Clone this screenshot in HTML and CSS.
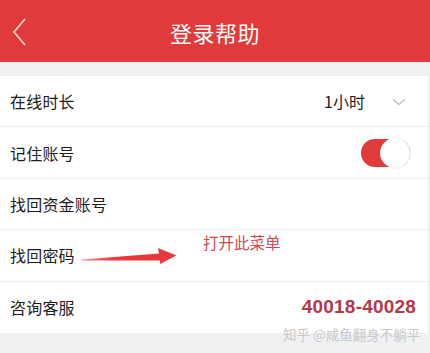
FILE: index.html
```html
<!DOCTYPE html>
<html lang="zh">
<head>
<meta charset="utf-8">
<link rel="stylesheet" href="styles.css">
</head>
<body>
<div class="page">
  <header class="topbar">
    <span class="back">
      <svg width="16" height="30" viewBox="0 0 16 30"><polyline points="13,2 2,15 13,28" fill="none" stroke="#f8dada" stroke-width="1.6"/></svg>
    </span>
    <h1 class="title">登录帮助</h1>
    <span class="spacer"></span>
  </header>
  <div class="gap"></div>
  <ul class="list">
    <li class="row">
      <span class="label">在线时长</span>
      <span class="value">
        <span class="duration">1小时</span>
        <svg class="caret" width="14" height="8" viewBox="0 0 14 8"><polyline points="1,1.5 7,6.5 13,1.5" fill="none" stroke="#bdbdbd" stroke-width="1.3"/></svg>
      </span>
    </li>
    <li class="row">
      <span class="label">记住账号</span>
      <span class="toggle"><span class="knob"></span></span>
    </li>
    <li class="row">
      <span class="label">找回资金账号</span>
    </li>
    <li class="row">
      <span class="label">找回密码</span>
    </li>
    <li class="row">
      <span class="label">咨询客服</span>
      <span class="phone">40018-40028</span>
    </li>
  </ul>
  <div class="bottom"></div>
  <svg class="arrow" width="430" height="353" viewBox="0 0 430 353">
    <defs>
      <linearGradient id="ag" x1="0" x2="1" y1="0" y2="0">
        <stop offset="0" stop-color="#f08a8a"/>
        <stop offset="0.35" stop-color="#e5393b"/>
        <stop offset="1" stop-color="#e63a3c"/>
      </linearGradient>
    </defs>
    <polygon points="82,259.5 159,253.5 158,248 176.5,255.5 160,264 160,260.5 82,260.5" fill="url(#ag)"/>
  </svg>
  <span class="note">打开此菜单</span>
  <span class="watermark">知乎 @咸鱼翻身不躺平</span>
</div>
</body>
</html>
```

FILE: styles.css
```css
* { box-sizing: border-box; }
html, body { margin: 0; padding: 0; }
body {
  background: #f0f1f3;
  font-family: "Noto Sans CJK SC", "Noto Sans", sans-serif;
  color: #1c1c1c;
}
.page {
  position: relative;
  width: 430px;
  height: 353px;
  overflow: hidden;
  background: #f0f1f3;
}
.topbar {
  height: 62px;
  background: #e03b3a;
  display: grid;
  grid-template-columns: 1fr auto 1fr;
  align-items: center;
}
.back {
  display: flex;
  align-items: center;
  padding-left: 12px;
  padding-top: 1px;
}
.back svg { display: block; }
.title {
  margin: 0;
  font-size: 22px;
  font-weight: 400;
  color: #fff;
  letter-spacing: 0.5px;
  line-height: 1;
  padding-top: 1px;
}
.gap { height: 14px; background: #eff0f2; }
.list {
  list-style: none;
  margin: 0;
  padding: 0;
  background: #fff;
  border-right: 2px solid #eceded;
}
.row {
  height: 51.4px;
  display: flex;
  align-items: center;
  justify-content: space-between;
  padding: 0 12px 0 10px;
  border-bottom: 1px solid #ececec;
  font-size: 16px;
}
.row:last-child { border-bottom: none; }
.label { letter-spacing: 0.2px; }
.value {
  display: flex;
  align-items: center;
  gap: 27px;
  padding-right: 10px;
}
.duration { font-size: 16px; color: #1c1c1c; }
.caret { display: block; margin-top: 2px; }
.toggle {
  position: relative;
  width: 49px;
  height: 28px;
  border-radius: 14px;
  background: #e03b3a;
  margin-right: 6px;
}
.knob {
  position: absolute;
  right: 0;
  top: -1px;
  width: 30px;
  height: 30px;
  border-radius: 50%;
  background: #fff;
  box-shadow: 0 0 2px rgba(0,0,0,0.18);
}
.phone {
  font-family: "Liberation Sans", Arial, sans-serif;
  font-weight: 700;
  font-size: 19px;
  color: #b2394a;
  letter-spacing: 0.2px;
}
.bottom { height: 20px; background: #f0f1f3; }
.arrow {
  position: absolute;
  left: 0;
  top: 0;
  pointer-events: none;
}
.note {
  position: absolute;
  left: 203px;
  top: 231px;
  font-size: 15.5px;
  color: #cf4a55;
  line-height: 22px;
}
.watermark {
  position: absolute;
  left: 283px;
  top: 324px;
  font-size: 13.5px;
  color: #c9c9c9;
  line-height: 20px;
  white-space: nowrap;
}
```
